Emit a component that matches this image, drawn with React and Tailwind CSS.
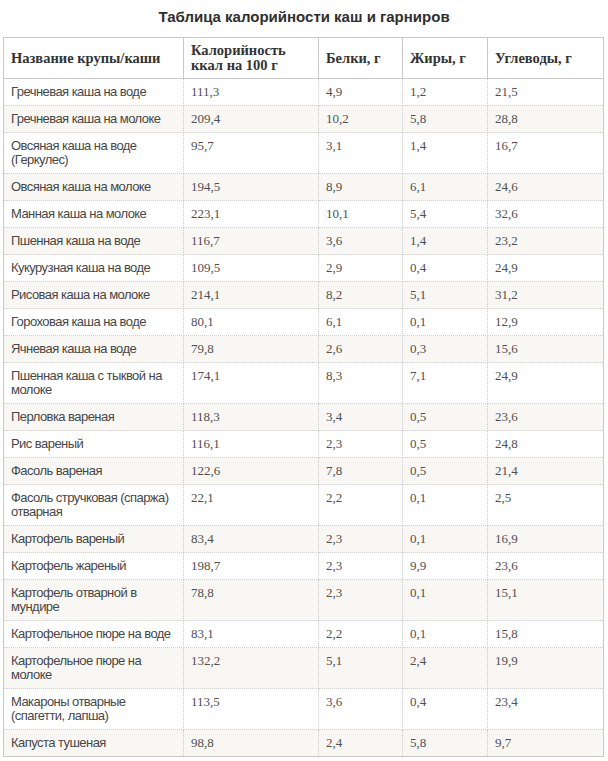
const rows = [
  ["Гречневая каша на воде", "111,3", "4,9", "1,2", "21,5"],
  ["Гречневая каша на молоке", "209,4", "10,2", "5,8", "28,8"],
  ["Овсяная каша на воде (Геркулес)", "95,7", "3,1", "1,4", "16,7"],
  ["Овсяная каша на молоке", "194,5", "8,9", "6,1", "24,6"],
  ["Манная каша на молоке", "223,1", "10,1", "5,4", "32,6"],
  ["Пшенная каша на воде", "116,7", "3,6", "1,4", "23,2"],
  ["Кукурузная каша на воде", "109,5", "2,9", "0,4", "24,9"],
  ["Рисовая каша на молоке", "214,1", "8,2", "5,1", "31,2"],
  ["Гороховая каша на воде", "80,1", "6,1", "0,1", "12,9"],
  ["Ячневая каша на воде", "79,8", "2,6", "0,3", "15,6"],
  ["Пшенная каша с тыквой на молоке", "174,1", "8,3", "7,1", "24,9"],
  ["Перловка вареная", "118,3", "3,4", "0,5", "23,6"],
  ["Рис вареный", "116,1", "2,3", "0,5", "24,8"],
  ["Фасоль вареная", "122,6", "7,8", "0,5", "21,4"],
  ["Фасоль стручковая (спаржа) отварная", "22,1", "2,2", "0,1", "2,5"],
  ["Картофель вареный", "83,4", "2,3", "0,1", "16,9"],
  ["Картофель жареный", "198,7", "2,3", "9,9", "23,6"],
  ["Картофель отварной в мундире", "78,8", "2,3", "0,1", "15,1"],
  ["Картофельное пюре на воде", "83,1", "2,2", "0,1", "15,8"],
  ["Картофельное пюре на молоке", "132,2", "5,1", "2,4", "19,9"],
  ["Макароны отварные (спагетти, лапша)", "113,5", "3,6", "0,4", "23,4"],
  ["Капуста тушеная", "98,8", "2,4", "5,8", "9,7"],
]

const th = "border border-[#c9c9c9] px-[7px] py-[5px] text-left align-middle font-bold text-[14.5px] leading-[15px] text-[#333]"
const td = "border-x border-x-[#c9c9c9] border-b border-b-[#cfcfcf] border-dotted px-[7px] pt-[6px] pb-[6px] align-top leading-[14px]"

function App() {
  return (
    <div className="w-[608px] h-[761px] bg-white overflow-hidden">
      <div className="pt-[8px] pb-[11px] text-center text-[15px] leading-[18px] font-bold text-[#2e2e2e] font-['Liberation_Sans',Arial,sans-serif]">
        Таблица калорийности каш и гарниров
      </div>
      <table className="ml-[3px] w-[600px] table-fixed border-collapse border border-[#c9c9c9]">
        <colgroup>
          <col className="w-[180px]" />
          <col className="w-[135px]" />
          <col className="w-[84px]" />
          <col className="w-[85px]" />
          <col className="w-[116px]" />
        </colgroup>
        <thead className="font-['Liberation_Serif',Georgia,serif]">
          <tr className="bg-white">
            <th className={th}>Название крупы/каши</th>
            <th className={th}>Калорийность<br />ккал на 100 г</th>
            <th className={th}>Белки, г</th>
            <th className={th}>Жиры, г</th>
            <th className={th}>Углеводы, г</th>
          </tr>
        </thead>
        <tbody>
          {rows.map((r, i) => (
            <tr key={i} className={i % 2 === 1 ? "bg-[#f9f7f4]" : "bg-white"}>
              <td className={td + " text-[#474747] font-['Liberation_Sans',Arial,sans-serif] text-[13px] tracking-[-0.55px] pr-[4px]"}>{r[0]}</td>
              {r.slice(1).map((v, j) => (
                <td key={j} className={td + " text-[#505050] text-[13px] font-['Liberation_Serif',Georgia,serif]"}>{v}</td>
              ))}
            </tr>
          ))}
        </tbody>
      </table>
    </div>
  )
}

export default App
